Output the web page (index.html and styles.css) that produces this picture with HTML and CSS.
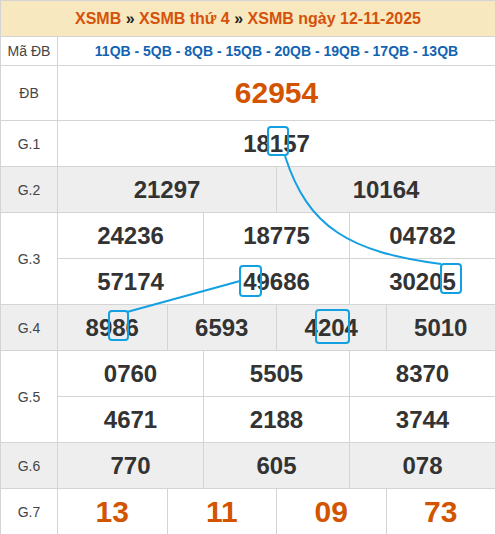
FILE: index.html
```html
<!DOCTYPE html>
<html lang="vi">
<head>
<meta charset="utf-8">
<title>XSMB ngày 12-11-2025</title>
<link rel="stylesheet" href="styles.css">
</head>
<body>
<div class="wrap">
<table class="kq">
  <colgroup>
    <col class="c-label">
    <col span="12">
  </colgroup>
  <tr class="r-head">
    <th colspan="13"><span class="hl">XSMB</span> » <span class="hl">XSMB thứ 4</span> » <span class="hl">XSMB ngày 12-11-2025</span></th>
  </tr>
  <tr class="r-code">
    <td class="lbl">Mã ĐB</td>
    <td colspan="12" class="codes">11QB - 5QB - 8QB - 15QB - 20QB - 19QB - 17QB - 13QB</td>
  </tr>
  <tr class="r-db">
    <td class="lbl">ĐB</td>
    <td colspan="12" class="num big">62954</td>
  </tr>
  <tr class="r-std">
    <td class="lbl">G.1</td>
    <td colspan="12" class="num">18157</td>
  </tr>
  <tr class="r-std r-g2 alt">
    <td class="lbl">G.2</td>
    <td colspan="6" class="num">21297</td>
    <td colspan="6" class="num">10164</td>
  </tr>
  <tr class="r-std">
    <td class="lbl" rowspan="2">G.3</td>
    <td colspan="4" class="num">24236</td>
    <td colspan="4" class="num">18775</td>
    <td colspan="4" class="num">04782</td>
  </tr>
  <tr class="r-std">
    <td colspan="4" class="num">57174</td>
    <td colspan="4" class="num">49686</td>
    <td colspan="4" class="num">30205</td>
  </tr>
  <tr class="r-std alt">
    <td class="lbl">G.4</td>
    <td colspan="3" class="num">8986</td>
    <td colspan="3" class="num">6593</td>
    <td colspan="3" class="num">4204</td>
    <td colspan="3" class="num">5010</td>
  </tr>
  <tr class="r-std">
    <td class="lbl" rowspan="2">G.5</td>
    <td colspan="4" class="num">0760</td>
    <td colspan="4" class="num">5505</td>
    <td colspan="4" class="num">8370</td>
  </tr>
  <tr class="r-std">
    <td colspan="4" class="num">4671</td>
    <td colspan="4" class="num">2188</td>
    <td colspan="4" class="num">3744</td>
  </tr>
  <tr class="r-std alt">
    <td class="lbl">G.6</td>
    <td colspan="4" class="num">770</td>
    <td colspan="4" class="num">605</td>
    <td colspan="4" class="num">078</td>
  </tr>
  <tr class="r-std">
    <td class="lbl">G.7</td>
    <td colspan="3" class="num big">13</td>
    <td colspan="3" class="num big">11</td>
    <td colspan="3" class="num big">09</td>
    <td colspan="3" class="num big">73</td>
  </tr>
</table>
<svg class="marks" width="496" height="534" viewBox="0 0 496 534" aria-hidden="true">
  <g fill="none" stroke="#13a0e2" stroke-width="2">
    <rect x="268" y="127" width="20" height="28" rx="3"/>
    <rect x="441" y="264" width="20" height="29" rx="3"/>
    <rect x="240" y="266" width="21" height="30" rx="3"/>
    <rect x="109" y="311" width="19" height="29" rx="3"/>
    <rect x="316" y="310" width="33" height="33" rx="3"/>
    <path d="M285 156 C 308 228 350 252 441 264"/>
    <path d="M127 312 L 240 281"/>
  </g>
</svg>
</div>
</body>
</html>
```
FILE: styles.css
```css
* { box-sizing: border-box; }
html, body { margin: 0; padding: 0; background: #fff; }
body { font-family: "Liberation Sans", Arial, sans-serif; color: #333; }
.wrap { position: relative; width: 496px; height: 534px; }
.kq {
  width: 496px;
  border-collapse: collapse;
  table-layout: fixed;
}
.c-label { width: 57px; }
.kq th, .kq td {
  border: 1px solid #d4d4d4;
  padding: 0;
  text-align: center;
  vertical-align: middle;
}
.r-head th {
  height: 36px;
  background: #f8e8bf;
  font-size: 16px;
  font-weight: bold;
  color: #222;
}
.hl { color: #d5520c; }
.r-code td { height: 29px; }
.lbl { font-size: 14px; color: #444; font-weight: normal; }
.codes { font-size: 14px; font-weight: bold; color: #1263b3; }
.r-db td { height: 55px; }
.r-g2 td { height: 45px; }
.r-std td { height: 46px; }
.alt td { background: #eeeeee; }
.num { font-size: 24px; font-weight: bold; color: #333; }
.num.big { font-size: 30px; color: #d35400; }
.marks { position: absolute; left: 0; top: 0; pointer-events: none; }
```
